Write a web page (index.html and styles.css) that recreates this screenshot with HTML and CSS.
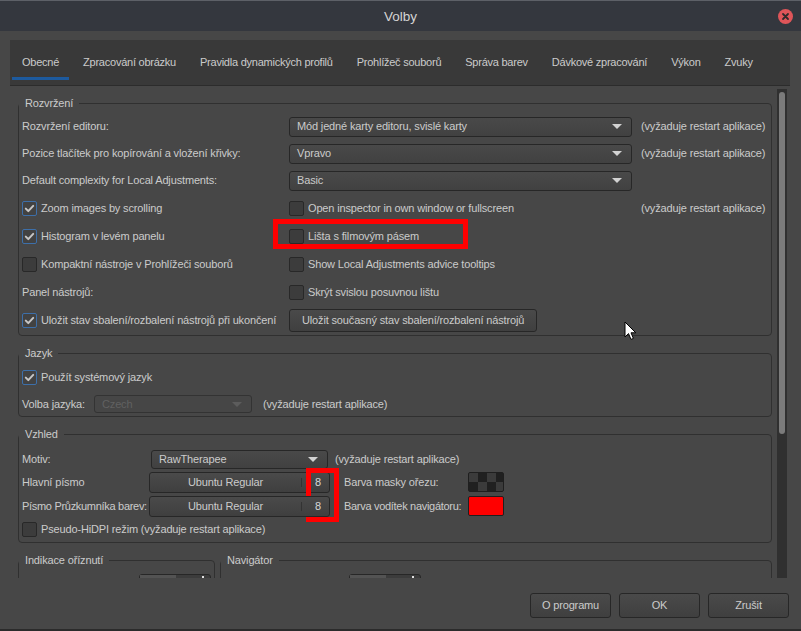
FILE: index.html
```html
<!DOCTYPE html>
<html lang="cs">
<head>
<meta charset="utf-8">
<title>Volby</title>
<link rel="stylesheet" href="styles.css">
</head>
<body>
<div class="window">
  <header class="titlebar">
    <span class="title">Volby</span>
    <span class="close">
      <svg viewBox="0 0 15 15" width="15" height="15"><circle cx="7.5" cy="7.5" r="7.5" fill="#df5559"/><path d="M5 5 L10 10 M10 5 L5 10" stroke="#2f2a2b" stroke-width="1.8" stroke-linecap="round"/></svg>
    </span>
  </header>

  <main class="main">
    <div class="notebook">
      <nav class="tabs">
        <span class="tab active">Obecné</span>
        <span class="tab">Zpracování obrázku</span>
        <span class="tab">Pravidla dynamických profilů</span>
        <span class="tab">Prohlížeč souborů</span>
        <span class="tab">Správa barev</span>
        <span class="tab">Dávkové zpracování</span>
        <span class="tab">Výkon</span>
        <span class="tab">Zvuky</span>
      </nav>

      <div class="page">
        <div class="content">

          <fieldset class="frame">
            <legend>Rozvržení</legend>
            <div class="frame-body layout-grid">
              <span class="c1">Rozvržení editoru:</span>
              <div class="combo c2"><span>Mód jedné karty editoru, svislé karty</span><i class="arrow"></i></div>
              <span class="note c3">(vyžaduje restart aplikace)</span>

              <span class="c1">Pozice tlačítek pro kopírování a vložení křivky:</span>
              <div class="combo c2"><span>Vpravo</span><i class="arrow"></i></div>
              <span class="note c3">(vyžaduje restart aplikace)</span>

              <span class="c1">Default complexity for Local Adjustments:</span>
              <div class="combo c2"><span>Basic</span><i class="arrow"></i></div>

              <label class="check c1"><span class="box on"><svg viewBox="0 0 13 13"><path d="M2.8 6.6 L5.3 9.1 L10.2 3.9"/></svg></span>Zoom images by scrolling</label>
              <label class="check c2"><span class="box"></span>Open inspector in own window or fullscreen</label>
              <span class="note c3">(vyžaduje restart aplikace)</span>

              <label class="check c1"><span class="box on"><svg viewBox="0 0 13 13"><path d="M2.8 6.6 L5.3 9.1 L10.2 3.9"/></svg></span>Histogram v levém panelu</label>
              <label class="check c2 marked"><span class="box"></span>Lišta s filmovým pásem<span class="annot annot-film"></span></label>

              <label class="check c1"><span class="box"></span>Kompaktní nástroje v Prohlížeči souborů</label>
              <label class="check c2"><span class="box"></span>Show Local Adjustments advice tooltips</label>

              <span class="c1">Panel nástrojů:</span>
              <label class="check c2"><span class="box"></span>Skrýt svislou posuvnou lištu</label>

              <label class="check c1"><span class="box on"><svg viewBox="0 0 13 13"><path d="M2.8 6.6 L5.3 9.1 L10.2 3.9"/></svg></span>Uložit stav sbalení/rozbalení nástrojů při ukončení</label>
              <button class="btn c2 save-btn">Uložit současný stav sbalení/rozbalení nástrojů</button>
            </div>
          </fieldset>

          <fieldset class="frame">
            <legend>Jazyk</legend>
            <div class="frame-body">
              <div class="lrow lr1">
                <label class="check"><span class="box on"><svg viewBox="0 0 13 13"><path d="M2.8 6.6 L5.3 9.1 L10.2 3.9"/></svg></span>Použít systémový jazyk</label>
              </div>
              <div class="lrow lr2">
                <span class="lang-label">Volba jazyka:</span>
                <div class="combo disabled lang-combo"><span>Czech</span><i class="arrow"></i></div>
                <span class="lang-note">(vyžaduje restart aplikace)</span>
              </div>
            </div>
          </fieldset>

          <fieldset class="frame">
            <legend>Vzhled</legend>
            <div class="frame-body look-grid">
              <span class="g1">Motiv:</span>
              <div class="combo g2 theme-combo"><span>RawTherapee</span><i class="arrow"></i></div>
              <span class="look-note">(vyžaduje restart aplikace)</span>

              <span class="g1">Hlavní písmo</span>
              <div class="fontbtn g2"><span class="fname">Ubuntu Regular</span><span class="fsep"></span><span class="fsize">8</span><span class="annot annot-font"></span></div>
              <span class="g4">Barva masky ořezu:</span>
              <span class="swatch checker g5"></span>

              <span class="g1 tight">Písmo Průzkumníka barev:</span>
              <div class="fontbtn g2"><span class="fname">Ubuntu Regular</span><span class="fsep"></span><span class="fsize">8</span></div>
              <span class="g4 tight">Barva vodítek navigátoru:</span>
              <span class="swatch red g5"></span>

              <label class="check gall"><span class="box"></span>Pseudo-HiDPI režim (vyžaduje restart aplikace)</label>
            </div>
          </fieldset>

          <div class="bottom-frames">
            <fieldset class="frame f-clip">
              <legend>Indikace oříznutí</legend>
              <div class="frame-body spin-row"><div class="spin"><span class="spin-fill"></span><span class="spin-dot"></span></div></div>
            </fieldset>
            <fieldset class="frame f-nav">
              <legend>Navigátor</legend>
              <div class="frame-body spin-row"><div class="spin"><span class="spin-fill"></span><span class="spin-dot"></span></div></div>
            </fieldset>
          </div>

        </div>
        <div class="scrollbar"><div class="thumb"></div></div>
      </div>
    </div>

    <div class="actions">
      <button class="btn">O programu</button>
      <button class="btn">OK</button>
      <button class="btn">Zrušit</button>
    </div>
  </main>

  <svg class="cursor" width="13" height="20" viewBox="0 0 13 20"><path d="M1 1 V16 L4.5 12.6 L7 18.4 L9.4 17.4 L7 11.8 H11.8 Z" fill="#ffffff" stroke="#000000" stroke-width="1" stroke-linejoin="round"/></svg>
</div>
</body>
</html>
```

FILE: styles.css
```css
* { box-sizing: border-box; }
html, body { margin: 0; padding: 0; }
body {
  background: #474747;
  font-family: "Liberation Sans", Arial, sans-serif;
  font-size: 11px;
  line-height: 13px;
  color: #cbcbcb;
  letter-spacing: -0.15px;
}

.window {
  position: relative;
  width: 801px;
  height: 631px;
  overflow: hidden;
  background: #474747;
  display: flex;
  flex-direction: column;
  border-bottom: 2px solid #2b2b2b;
}

/* title bar */
.titlebar {
  height: 31px;
  flex: none;
  border-top: 1px solid #5d6067;
  background: #34373e;
  display: grid;
  grid-template-columns: 1fr auto 1fr;
  align-items: center;
}
.title { grid-column: 2; font-size: 13.5px; color: #d4d4d4; letter-spacing: 0; }
.close { grid-column: 3; justify-self: end; margin-right: 8px; width: 15px; height: 15px; display: flex; }

/* main */
.main {
  flex: 1;
  padding: 9px 11px 0 10px;
  display: flex;
  flex-direction: column;
}
.notebook { flex: none; }
.tabs {
  height: 46px;
  background: #393939;
  border-bottom: 1px solid #2c2c2c;
  display: flex;
  gap: 4px;
  padding-left: 2px;
  align-items: flex-start;
}
.tab {
  padding: 16px 10px 8px;
  border-bottom: 3px solid transparent;
  white-space: nowrap;
  letter-spacing: -0.24px;
}
.tab.active { border-bottom-color: #1d5a9e; }

.page { height: 492px; display: flex; overflow: hidden; }
.content {
  flex: 1;
  min-width: 0;
  padding: 11px 0 0 8px;
  display: flex;
  flex-direction: column;
  gap: 11px;
}
.content > * { flex: none; }

.scrollbar {
  width: 10px;
  flex: none;
  margin: 3px 3px 0 5px;
  background: #303030;
  padding: 3px 2px 0;
}
.thumb { height: 342px; background: #7b7b7b; border-radius: 3px; }

/* frames */
.frame {
  margin: 0;
  padding: 0;
  min-width: 0;
  border: 1px solid #303030;
  border-radius: 4px;
}
.frame > legend { padding: 0 6px; line-height: 13px; }
.frame-body { padding: 3px 3px 0; }

/* layout frame */
.layout-grid {
  display: grid;
  grid-template-columns: 267px 343px 1fr;
  grid-template-rows: 27px 27px 27px 28px 28px 28px 28px 29px;
  align-items: center;
}
.c1 { grid-column: 1; white-space: nowrap; }
.c2 { grid-column: 2; }
.c3 { grid-column: 3; }
.note { padding-left: 9px; white-space: nowrap; }

.check {
  display: flex;
  align-items: center;
  gap: 4px;
  justify-self: start;
  white-space: nowrap;
}
.marked { position: relative; }
.box {
  width: 15px;
  height: 15px;
  flex: none;
  border: 1px solid #282828;
  border-radius: 2px;
  background: #3c3c3c;
  display: flex;
}
.box.on { border-color: #3d6fa9; background: #424242; }
.box svg { width: 13px; height: 13px; }
.box path { fill: none; stroke: #c6c6c6; stroke-width: 2; stroke-linecap: round; stroke-linejoin: round; }

.combo {
  height: 20px;
  border: 1px solid #272727;
  border-radius: 3px;
  background: linear-gradient(#494949, #414141);
  display: flex;
  align-items: center;
  justify-content: space-between;
  padding: 0 9px 0 7px;
  white-space: nowrap;
}
.arrow {
  width: 0;
  height: 0;
  border-left: 5px solid transparent;
  border-right: 5px solid transparent;
  border-top: 5px solid #d2d2d2;
}
.combo.disabled { color: #616161; background: #464646; border-color: #333333; }
.combo.disabled .arrow { border-top-color: #5c5c5c; }

.btn {
  font: inherit;
  letter-spacing: inherit;
  color: #cbcbcb;
  height: 23px;
  border: 1px solid #272727;
  border-radius: 3px;
  background: linear-gradient(#4a4a4a, #3f3f3f);
  padding: 0 12px;
  white-space: nowrap;
}
.save-btn { justify-self: start; padding: 0 12px; }

/* language frame */
.lrow { display: flex; align-items: center; }
.lr1 { height: 29px; }
.lr2 { height: 24px; }
.lang-label { width: 72px; white-space: nowrap; }
.lang-combo { width: 158px; height: 18px; }
.lang-note { margin-left: 11px; white-space: nowrap; }

/* look frame */
.look-grid {
  display: grid;
  grid-template-columns: 127px 181px 14px 124px 36px 1fr;
  grid-template-rows: 22px 24px 24px 22px;
  align-items: center;
  padding: 7px 3px 2px;
}
.g1 { grid-column: 1; white-space: nowrap; }
.g2 { grid-column: 2; }
.g4 { grid-column: 4; white-space: nowrap; }
.g5 { grid-column: 5; }
.gall { grid-column: 1 / -1; }
.tight { letter-spacing: -0.3px; }
.theme-combo { height: 19px; margin: 0 2px; }
.look-note { grid-column: 3 / -1; padding-left: 5px; white-space: nowrap; }

.fontbtn {
  position: relative;
  height: 21px;
  display: flex;
  align-items: center;
  border: 1px solid #272727;
  border-radius: 3px;
  background: linear-gradient(#4a4a4a, #3f3f3f);
}
.fname { flex: 1; text-align: center; white-space: nowrap; }
.fsep { width: 1px; height: 9px; background: #333333; }
.fsize { width: 27px; padding-left: 5px; text-align: center; color: #d8d8d8; }

.swatch {
  width: 36px;
  height: 20px;
  border: 1px solid #1f1f1f;
  border-radius: 2px;
}
.checker {
  background: repeating-conic-gradient(#202020 0 25%, #3b3b3b 0 50%) 0 0 / 18px 18px;
}
.red { background: #ff0000; }

/* annotations drawn over the screenshot */
.annot {
  position: absolute;
  border: 5px solid #ff0000;
  pointer-events: none;
}
.annot-film { left: -16px; top: -10px; width: 195px; height: 30px; }
.annot-font { left: 156px; top: -5px; width: 33px; height: 54px; }

/* bottom partial frames */
.bottom-frames { display: flex; gap: 5px; }
.f-clip { width: 197px; flex: none; }
.f-nav { flex: 1; }
.spin-row { padding: 7px 3px 0; height: 40px; display: flex; }
.spin {
  width: 72px;
  height: 24px;
  border: 1px solid #272727;
  border-radius: 3px;
  background: #3c3c3c;
  display: flex;
  align-items: flex-start;
}
.f-clip .spin { margin-left: 117px; }
.f-nav .spin { margin-left: 125px; }
.spin-fill { width: 36px; height: 100%; background: #535353; }
.spin-dot { width: 2px; height: 2px; margin: 1px 0 0 26px; background: #e0e0e0; }

/* dialog buttons */
.actions {
  display: flex;
  justify-content: flex-end;
  gap: 8px;
  margin-top: 15px;
  padding-right: 1px;
}
.actions .btn { width: 81px; height: 25px; padding: 0; }

.cursor { position: absolute; left: 624px; top: 321px; }
```
